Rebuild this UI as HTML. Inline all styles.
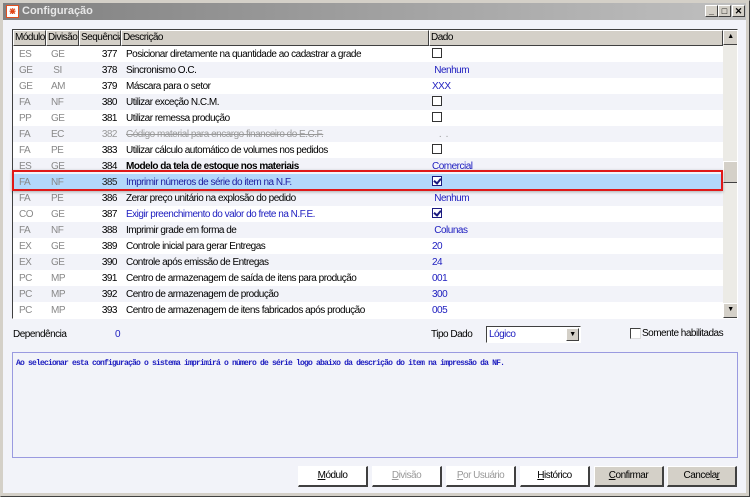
<!DOCTYPE html>
<html><head><meta charset="utf-8"><style>
*{box-sizing:border-box;margin:0;padding:0}
body{width:750px;height:497px;overflow:hidden;background:#d4d0c8;font-family:"Liberation Sans",sans-serif;font-size:10px;letter-spacing:-0.5px;position:relative}
.win{position:absolute;left:0;top:0;width:750px;height:497px;border:1px solid #d4d0c8;border-right-color:#404040;border-bottom-color:#404040;background:#d4d0c8}
.title{position:absolute;left:3px;top:3px;width:743px;height:17px;background:linear-gradient(90deg,#808080,#c0c0c0);color:#e8e8e8;font-weight:bold;font-size:11px;letter-spacing:0;line-height:17px;padding-left:19px}
.ico{position:absolute;left:3px;top:2px;width:13px;height:13px;background:#fff;border:1px solid #e05020;color:#e04010;font-size:9px;line-height:11px;text-align:center}
.tb{position:absolute;top:2px;width:13px;height:12px;background:#d4d0c8;border:1px solid #fff;border-right-color:#404040;border-bottom-color:#404040;font-size:9px;line-height:10px;text-align:center;color:#000;font-weight:bold}
.body{position:absolute;left:3px;top:20px;width:743px;height:473px;background:#f2f3f9}
.grid{position:absolute;left:12px;top:29px;width:726px;height:290px;border:1px solid #404040;border-right-color:#fff;border-bottom-color:#fff;background:#fff;overflow:hidden}
.hdr{position:absolute;left:0;top:0;height:16px;width:710px;background:#d4d0c8}
.hc{position:absolute;top:0;height:16px;border:1px solid #fff;border-right-color:#404040;border-bottom-color:#404040;line-height:14px;padding-left:1px;color:#000;overflow:hidden;white-space:nowrap}
.row{position:absolute;left:0;width:710px;height:16px;line-height:17px;color:#000}
.row span{position:absolute;top:0;white-space:nowrap}
.m{left:6px;color:#888}.d{left:38px;color:#888}.s{left:70px;width:34px;text-align:right}.t{left:113px}.v{left:419px;color:#2020c0}
.cb{display:inline-block;width:10px;height:10px;border:1px solid #333;background:#fff;vertical-align:-1px;position:relative}
.ck{border-color:#1a1a80}
.ck:after{content:"";position:absolute;left:2px;top:0px;width:3px;height:5px;border:solid #1a1a80;border-width:0 2px 2px 0;transform:rotate(40deg)}
.sb{position:absolute;left:710px;top:0;width:15px;height:288px;background:#ecebe6}
.sbb{position:absolute;left:0;width:15px;height:15px;background:#d4d0c8;border:1px solid #fff;border-right-color:#404040;border-bottom-color:#404040;font-size:7px;text-align:center;line-height:12px}
.btn{position:absolute;top:466px;width:70px;height:21px;background:#fff;border:1px solid #fff;border-right:2px solid #404040;border-bottom:2px solid #404040;text-align:center;line-height:18px;font-size:10px;color:#000}
.dis{color:#999}
u{text-decoration:underline}
</style></head><body>
<div class="win"></div>
<div class="title"><div class="ico">⋇</div>Configuração
<div class="tb" style="left:702px">_</div><div class="tb" style="left:715px">□</div><div class="tb" style="left:729px">✕</div></div>
<div class="body"></div>
<div class="grid">
<div class="hdr">
<div class="hc" style="left:0;width:33px">Módulo</div>
<div class="hc" style="left:33px;width:33px">Divisão</div>
<div class="hc" style="left:66px;width:42px">Sequência</div>
<div class="hc" style="left:108px;width:308px">Descrição</div>
<div class="hc" style="left:416px;width:294px">Dado</div>
</div>
<div class="row" style="top:16px;background:#fff"><span class="m">ES</span><span class="d">GE</span><span class="s">377</span><span class="t">Posicionar diretamente na quantidade ao cadastrar a grade</span><span class="v"><i class="cb"></i></span></div>
<div class="row" style="top:32px;background:#f2f3f9"><span class="m">GE</span><span class="d">&nbsp;SI</span><span class="s">378</span><span class="t">Sincronismo O.C.</span><span class="v">&nbsp;Nenhum</span></div>
<div class="row" style="top:48px;background:#fff"><span class="m">GE</span><span class="d">AM</span><span class="s">379</span><span class="t">Máscara para o setor</span><span class="v">XXX</span></div>
<div class="row" style="top:64px;background:#f2f3f9"><span class="m">FA</span><span class="d">NF</span><span class="s">380</span><span class="t">Utilizar exceção N.C.M.</span><span class="v"><i class="cb"></i></span></div>
<div class="row" style="top:80px;background:#fff"><span class="m">PP</span><span class="d">GE</span><span class="s">381</span><span class="t">Utilizar remessa produção</span><span class="v"><i class="cb"></i></span></div>
<div class="row" style="top:96px;background:#f2f3f9"><span class="m">FA</span><span class="d">EC</span><span class="s" style="color:#999">382</span><span class="t" style="color:#999;text-decoration:line-through">Código material para encargo financeiro do E.C.F.</span><span class="v" style="color:#999">&nbsp;&nbsp;&nbsp;. &nbsp;.</span></div>
<div class="row" style="top:112px;background:#fff"><span class="m">FA</span><span class="d">PE</span><span class="s">383</span><span class="t">Utilizar cálculo automático de volumes nos pedidos</span><span class="v"><i class="cb"></i></span></div>
<div class="row" style="top:128px;background:#f2f3f9"><span class="m">ES</span><span class="d">GE</span><span class="s">384</span><span class="t" style="font-weight:bold">Modelo da tela de estoque nos materiais</span><span class="v">Comercial</span></div>
<div class="row" style="top:144px;background:#b3d7fb"><span class="m">FA</span><span class="d">NF</span><span class="s" style="color:#222">385</span><span class="t" style="color:#2020a0">Imprimir números de série do item na N.F.</span><span class="v"><i class="cb ck"></i></span></div>
<div class="row" style="top:160px;background:#f2f3f9"><span class="m">FA</span><span class="d">PE</span><span class="s">386</span><span class="t">Zerar preço unitário na explosão do pedido</span><span class="v">&nbsp;Nenhum</span></div>
<div class="row" style="top:176px;background:#fff"><span class="m">CO</span><span class="d">GE</span><span class="s">387</span><span class="t" style="color:#2020c0">Exigir preenchimento do valor do frete na N.F.E.</span><span class="v"><i class="cb ck"></i></span></div>
<div class="row" style="top:192px;background:#f2f3f9"><span class="m">FA</span><span class="d">NF</span><span class="s">388</span><span class="t">Imprimir grade em forma de</span><span class="v">&nbsp;Colunas</span></div>
<div class="row" style="top:208px;background:#fff"><span class="m">EX</span><span class="d">GE</span><span class="s">389</span><span class="t">Controle inicial para gerar Entregas</span><span class="v">20</span></div>
<div class="row" style="top:224px;background:#f2f3f9"><span class="m">EX</span><span class="d">GE</span><span class="s">390</span><span class="t">Controle após emissão de Entregas</span><span class="v">24</span></div>
<div class="row" style="top:240px;background:#fff"><span class="m">PC</span><span class="d">MP</span><span class="s">391</span><span class="t">Centro de armazenagem de saída de itens para produção</span><span class="v">001</span></div>
<div class="row" style="top:256px;background:#f2f3f9"><span class="m">PC</span><span class="d">MP</span><span class="s">392</span><span class="t">Centro de armazenagem de produção</span><span class="v">300</span></div>
<div class="row" style="top:272px;background:#fff"><span class="m">PC</span><span class="d">MP</span><span class="s">393</span><span class="t">Centro de armazenagem de itens fabricados após produção</span><span class="v">005</span></div>
<div class="sb"><div class="sbb" style="top:0">▲</div><div class="sbb" style="top:131px;height:22px"></div><div class="sbb" style="top:273px">▼</div></div>
</div>
<div style="position:absolute;left:12px;top:170px;width:711px;height:21px;border:2px solid #e01818;box-shadow:0 1px 3px rgba(0,0,0,.3)"></div>
<div style="position:absolute;left:13px;top:329px">Dependência</div>
<div style="position:absolute;left:115px;top:329px;color:#2020c0">0</div>
<div style="position:absolute;left:431px;top:329px">Tipo Dado</div>
<div style="position:absolute;left:486px;top:326px;width:95px;height:17px;border:1px solid #404040;border-right-color:#fff;border-bottom-color:#fff;background:#fff;color:#2020c0;line-height:15px;padding-left:2px">Lógico<div style="position:absolute;right:1px;top:1px;width:13px;height:13px;background:#d4d0c8;border:1px solid #fff;border-right-color:#404040;border-bottom-color:#404040;font-size:7px;text-align:center;line-height:11px;color:#000">▼</div></div>
<div style="position:absolute;left:630px;top:328px;width:11px;height:11px;border:1px solid #404040;border-right-color:#ddd;border-bottom-color:#ddd;background:#fff"></div>
<div style="position:absolute;left:642px;top:328px">Somente habilitadas</div>
<div style="position:absolute;left:12px;top:352px;width:726px;height:106px;border:1px solid #9a9ae0;background:#f2f3f9;font-family:'Liberation Mono',monospace;font-size:8px;letter-spacing:-0.8px;color:#2020c0;padding:6px 0 0 3px;font-weight:bold">Ao selecionar esta configuração o sistema imprimirá o número de série logo abaixo da descrição do item na impressão da NF.</div>
<div class="btn" style="left:298px"><u>M</u>ódulo</div>
<div class="btn dis" style="left:372px"><u>D</u>ivisão</div>
<div class="btn dis" style="left:446px"><u>P</u>or Usuário</div>
<div class="btn" style="left:520px"><u>H</u>istórico</div>
<div class="btn" style="left:594px;background:#d4d0c8"><u>C</u>onfirmar</div>
<div class="btn" style="left:667px;background:#d4d0c8">Cancela<u>r</u></div>
</body></html>
